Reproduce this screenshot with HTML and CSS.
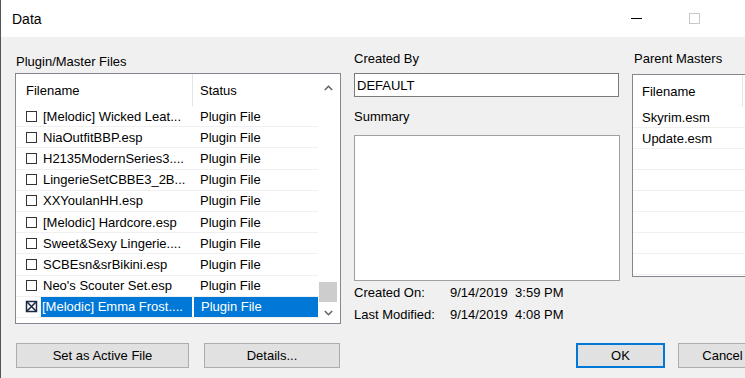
FILE: index.html
```html
<!DOCTYPE html>
<html lang="en">
<head>
    <meta charset="UTF-8">
    <meta name="viewport" content="width=device-width, initial-scale=1.0">
    <title>Data</title>
    <link rel="stylesheet" href="styles.css">
</head>
<body>
    <div class="dialog">
        <div class="titlebar">
            <span class="title">Data</span>
            <div class="controls">
                <span class="ctl-min"></span>
                <span class="ctl-max"></span>
                <svg class="ctl-close" width="10" height="10" viewBox="0 0 10 10"><path d="M0.5 0.5L9.5 9.5M9.5 0.5L0.5 9.5" stroke="#000" stroke-width="1"/></svg>
            </div>
        </div>

        <div class="content">
            <div class="panels">
                <div class="col-files">
                    <div class="caption">Plugin/Master Files</div>
                    <div class="listview files">
                        <div class="lv-body">
                            <div class="lv-head">
                                <div class="c-name">Filename</div>
                                <div class="c-status">Status</div>
                            </div>
                            <div class="lv-row"><div class="c-name"><span class="check"></span><span class="name">[Melodic] Wicked Leat...</span></div><div class="c-status">Plugin File</div></div>
                            <div class="lv-row"><div class="c-name"><span class="check"></span><span class="name">NiaOutfitBBP.esp</span></div><div class="c-status">Plugin File</div></div>
                            <div class="lv-row"><div class="c-name"><span class="check"></span><span class="name">H2135ModernSeries3....</span></div><div class="c-status">Plugin File</div></div>
                            <div class="lv-row"><div class="c-name"><span class="check"></span><span class="name">LingerieSetCBBE3_2B...</span></div><div class="c-status">Plugin File</div></div>
                            <div class="lv-row"><div class="c-name"><span class="check"></span><span class="name">XXYoulanHH.esp</span></div><div class="c-status">Plugin File</div></div>
                            <div class="lv-row"><div class="c-name"><span class="check"></span><span class="name">[Melodic] Hardcore.esp</span></div><div class="c-status">Plugin File</div></div>
                            <div class="lv-row"><div class="c-name"><span class="check"></span><span class="name">Sweet&amp;Sexy Lingerie....</span></div><div class="c-status">Plugin File</div></div>
                            <div class="lv-row"><div class="c-name"><span class="check"></span><span class="name">SCBEsn&amp;srBikini.esp</span></div><div class="c-status">Plugin File</div></div>
                            <div class="lv-row"><div class="c-name"><span class="check"></span><span class="name">Neo's Scouter Set.esp</span></div><div class="c-status">Plugin File</div></div>
                            <div class="lv-row sel">
                                <div class="c-name">
                                    <svg class="check-on" width="13" height="13" viewBox="0 0 13 13">
                                        <rect x="1.5" y="1.5" width="10" height="10" fill="#fff" stroke="#1c2c44" stroke-width="1.5"/>
                                        <path d="M2 2L11 11M11 2L2 11" stroke="#1c2c44" stroke-width="1.6"/>
                                    </svg>
                                    <span class="name">[Melodic] Emma Frost....</span>
                                </div>
                                <div class="c-status">Plugin File</div>
                            </div>
                        </div>
                        <div class="scrollbar">
                            <div class="sb-arrow sb-up">
                                <svg width="9" height="6" viewBox="0 0 9 6"><polyline points="0.8,5 4.5,1.3 8.2,5" fill="none" stroke="#606060" stroke-width="1.5"/></svg>
                            </div>
                            <div class="sb-track"></div>
                            <div class="sb-thumb"></div>
                            <div class="sb-arrow sb-down">
                                <svg width="9" height="6" viewBox="0 0 9 6"><polyline points="0.8,1 4.5,4.7 8.2,1" fill="none" stroke="#606060" stroke-width="1.5"/></svg>
                            </div>
                        </div>
                    </div>
                </div>

                <div class="col-info">
                    <div class="caption">Created By</div>
                    <div class="field">DEFAULT</div>
                    <div class="caption">Summary</div>
                    <div class="summary"></div>
                    <div class="dates">
                        <span>Created On:</span><span class="val">9/14/2019  3:59 PM</span>
                        <span>Last Modified:</span><span class="val">9/14/2019  4:08 PM</span>
                    </div>
                </div>

                <div class="col-masters">
                    <div class="caption">Parent Masters</div>
                    <div class="listview masters">
                        <div class="lv-head">
                            <div class="m-name">Filename</div>
                        </div>
                        <div class="m-row">Skyrim.esm</div>
                        <div class="m-row">Update.esm</div>
                        <div class="m-row"></div>
                        <div class="m-row"></div>
                        <div class="m-row"></div>
                        <div class="m-row"></div>
                        <div class="m-row"></div>
                        <div class="m-row"></div>
                    </div>
                </div>
            </div>

            <div class="buttons">
                <button class="btn btn-active">Set as Active File</button>
                <button class="btn btn-details">Details...</button>
                <button class="btn btn-ok">OK</button>
                <button class="btn btn-cancel">Cancel</button>
            </div>
        </div>
    </div>
</body>
</html>
```

FILE: styles.css
```css
* {
    font-family: 'Liberation Sans', Arial, sans-serif;
    box-sizing: border-box;
}

body {
    margin: 0;
    width: 745px;
    height: 378px;
    overflow: hidden;
    background-color: #f0f0f0;
    font-size: 13px;
    color: #000;
}

.dialog {
    width: 780px;
    height: 378px;
    border-left: 1px solid #555;
    background-color: #f0f0f0;
}

/* title bar */
.titlebar {
    height: 37px;
    background-color: #fff;
    display: flex;
    align-items: center;
    padding-left: 11px;
    padding-right: 23px;
}

.title {
    font-size: 14px;
}

.controls {
    margin-left: auto;
    display: flex;
    align-items: center;
    gap: 47px;
}

.ctl-min {
    width: 11px;
    height: 1px;
    background-color: #000;
}

.ctl-max {
    width: 11px;
    height: 11px;
    border: 1px solid #c8c8c8;
}

/* main area */
.content {
    padding: 15px 13px 0 14px;
}

.panels {
    display: flex;
    align-items: flex-start;
}

.caption {
    line-height: 14px;
}

.col-files {
    width: 326px;
}

.col-files .caption {
    margin-top: 3px;
    margin-bottom: 4px;
    padding-left: 1px;
}

.col-info {
    width: 266px;
    margin-left: 13px;
}

.col-masters {
    width: 135px;
    margin-left: 12px;
}

.col-masters .caption {
    padding-left: 2px;
}

/* list views */
.listview {
    display: flex;
    border: 1px solid #828790;
    background-color: #fff;
}

.files {
    height: 251px;
}

.lv-body {
    flex: 1;
}

.lv-head {
    display: flex;
    height: 32px;
    align-items: center;
}

.lv-head .c-name {
    border-right: 1px solid #e5e5e5;
    align-self: stretch;
}

.lv-row {
    display: flex;
    height: 21.2px;
    border-bottom: 1px solid #f0f0f0;
}

.c-name {
    width: 177px;
    padding-left: 10px;
    display: flex;
    align-items: center;
    white-space: nowrap;
    overflow: hidden;
}

.c-status {
    flex: 1;
    padding-left: 7px;
    display: flex;
    align-items: center;
}

.check {
    width: 11px;
    height: 11px;
    border: 1px solid #333;
    background-color: #fff;
    margin-right: 5px;
    flex: none;
}

.check-on {
    margin-left: -1px;
    margin-right: 3px;
    flex: none;
}

.name {
    padding-left: 1px;
}

.lv-row.sel .name {
    flex: 1;
    align-self: stretch;
    display: flex;
    align-items: center;
    background-color: #0078d7;
    color: #fff;
    margin-right: 1px;
}

.lv-row.sel .c-status {
    background-color: #0078d7;
    color: #fff;
    margin-left: 1px;
}

/* scrollbar */
.scrollbar {
    width: 22px;
    display: flex;
    flex-direction: column;
}

.sb-arrow {
    display: flex;
    justify-content: center;
    align-items: center;
    padding-right: 2px;
}

.sb-up {
    height: 28px;
}

.sb-track {
    flex: 1;
}

.sb-thumb {
    height: 20px;
    margin: 0 3px 0 1px;
    background-color: #cdcdcd;
}

.sb-down {
    height: 21px;
}

/* info column */
.col-info .caption:first-child {
    margin-bottom: 7px;
}

.field {
    width: 265px;
    height: 24px;
    border: 1px solid #7a7a7a;
    background-color: #fff;
    padding-left: 2px;
    display: flex;
    align-items: center;
    margin-bottom: 13px;
}

.summary {
    height: 146px;
    margin-top: 11px;
    border: 1px solid #a0a0a0;
    background-color: #fff;
}

.dates {
    margin-top: 5px;
    display: grid;
    grid-template-columns: 96px auto;
    row-gap: 8px;
    line-height: 14px;
}

.dates .val {
    white-space: pre;
}

/* parent masters */
.masters {
    height: 203px;
    margin-top: 8px;
    flex-direction: column;
}

.m-name {
    width: 110px;
    align-self: stretch;
    padding-left: 9px;
    display: flex;
    align-items: center;
    border-right: 1px solid #e5e5e5;
}

.m-row {
    height: 21px;
    padding-left: 9px;
    border-bottom: 1px solid #f0f0f0;
    display: flex;
    align-items: center;
}

/* buttons */
.buttons {
    display: flex;
    margin-top: 19px;
    padding-left: 1px;
}

.btn {
    height: 25px;
    border: 1px solid #adadad;
    background-color: #e1e1e1;
    font-size: 13px;
    color: #000;
    padding: 0;
}

.btn-active {
    width: 173px;
}

.btn-details {
    width: 136px;
    margin-left: 15px;
}

.btn-ok {
    width: 89px;
    margin-left: auto;
    border: 2px solid #0078d7;
}

.btn-cancel {
    width: 89px;
    margin-left: 13px;
}
```
